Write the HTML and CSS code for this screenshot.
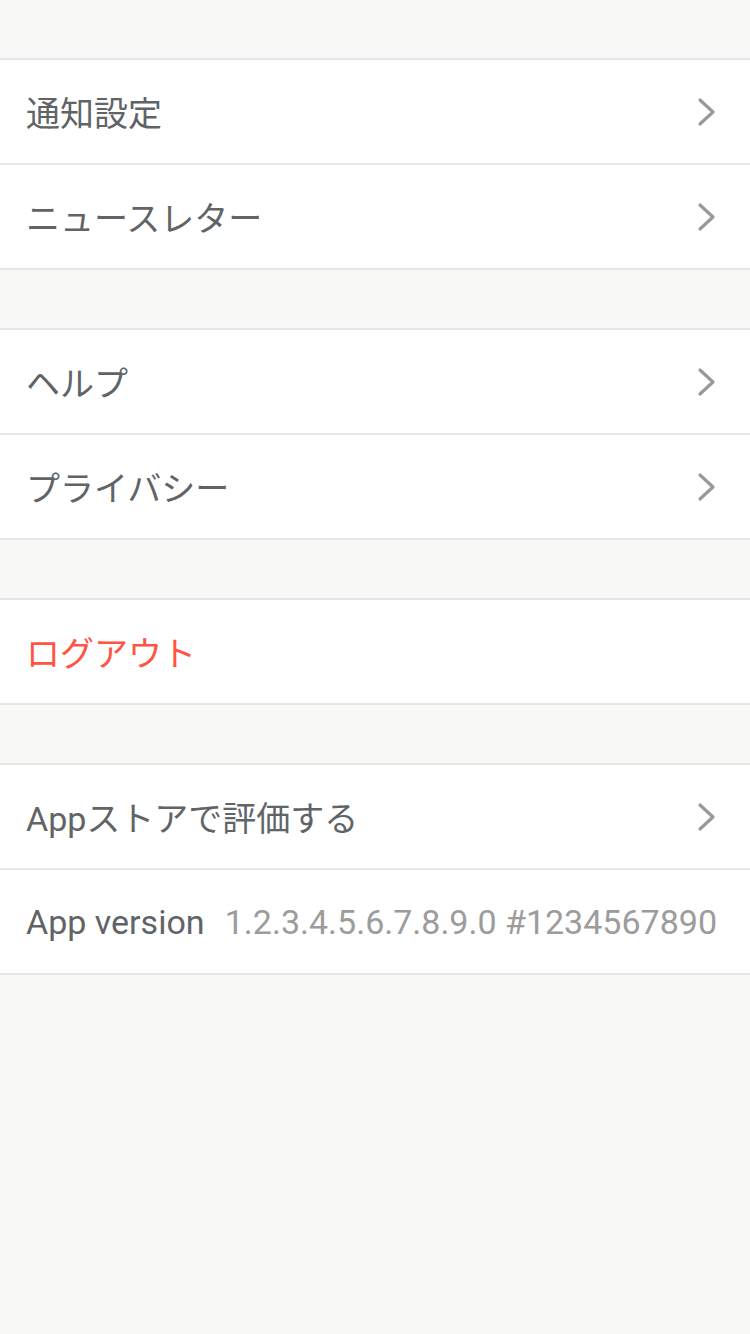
FILE: index.html
```html
<!DOCTYPE html>
<html lang="ja">
<head>
<meta charset="utf-8">
<link rel="stylesheet" href="styles.css">
</head>
<body>
<div class="page">
  <div class="group">
    <div class="row"><span class="label">通知設定</span><svg class="chev" viewBox="0 0 20 30"><path d="M3 3 L16 15 L3 27"/></svg></div>
    <div class="row"><span class="label">ニュースレター</span><svg class="chev" viewBox="0 0 20 30"><path d="M3 3 L16 15 L3 27"/></svg></div>
  </div>
  <div class="group">
    <div class="row"><span class="label">ヘルプ</span><svg class="chev" viewBox="0 0 20 30"><path d="M3 3 L16 15 L3 27"/></svg></div>
    <div class="row"><span class="label">プライバシー</span><svg class="chev" viewBox="0 0 20 30"><path d="M3 3 L16 15 L3 27"/></svg></div>
  </div>
  <div class="group">
    <div class="row"><span class="label danger">ログアウト</span></div>
  </div>
  <div class="group">
    <div class="row"><span class="label">Appストアで評価する</span><svg class="chev" viewBox="0 0 20 30"><path d="M3 3 L16 15 L3 27"/></svg></div>
    <div class="row"><span class="label">App version</span><span class="value">1.2.3.4.5.6.7.8.9.0 #1234567890</span></div>
  </div>
</div>
</body>
</html>
```
FILE: styles.css
```css
html, body {
  margin: 0;
  padding: 0;
  background: #f8f8f6;
}
.page {
  width: 750px;
  min-height: 1334px;
  padding-top: 58px;
  box-sizing: border-box;
  display: flex;
  flex-direction: column;
  gap: 58px;
  font-family: "Roboto", "Noto Sans CJK JP", sans-serif;
}
.group {
  background: #fff;
  border-top: 2px solid #e6e6e6;
}
.row {
  height: 103px;
  border-bottom: 2px solid #e6e6e6;
  display: flex;
  align-items: center;
  justify-content: space-between;
  padding: 0 33px 0 26px;
}
.label {
  font-size: 34px;
  color: #606467;
}
.danger {
  color: #ff5343;
}
.value {
  font-size: 34px;
  color: #9c9c9c;
}
.chev {
  width: 20px;
  height: 30px;
  fill: none;
  stroke: #999;
  stroke-width: 3.2;
  stroke-linecap: round;
  stroke-linejoin: round;
}
```
